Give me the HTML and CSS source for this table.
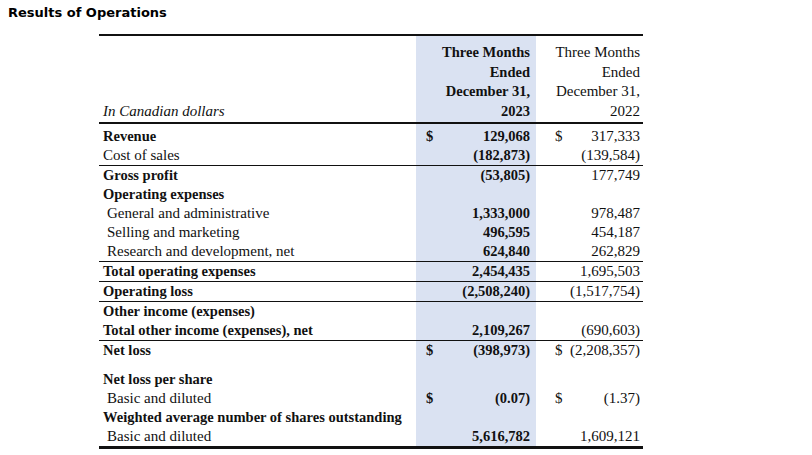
FILE: index.html
```html
<!DOCTYPE html>
<html>
<head>
<meta charset="utf-8">
<link rel="stylesheet" href="styles.css">
</head>
<body>
<h1 class="title">Results of Operations</h1>
<table class="fin">
  <colgroup>
    <col class="c-label"><col class="c-cur1"><col class="c-num1"><col class="c-cur2"><col class="c-num2">
  </colgroup>
  <tr class="head">
    <td class="label"><i>In Canadian dollars</i></td>
    <td class="blue hnum" colspan="2"><b>Three Months<br>Ended<br>December 31,<br>2023</b></td>
    <td class="hnum2" colspan="2">Three Months<br>Ended<br>December 31,<br>2022</td>
  </tr>
  <tr class="first">
    <td class="label b">Revenue</td><td class="blue cur b">$</td><td class="blue num b">129,068</td><td class="cur2">$</td><td class="num2">317,333</td>
  </tr>
  <tr class="line">
    <td class="label">Cost of sales</td><td class="blue cur"></td><td class="blue num b">(182,873)</td><td class="cur2"></td><td class="num2">(139,584)</td>
  </tr>
  <tr>
    <td class="label b">Gross profit</td><td class="blue cur"></td><td class="blue num b">(53,805)</td><td class="cur2"></td><td class="num2">177,749</td>
  </tr>
  <tr>
    <td class="label b">Operating expenses</td><td class="blue cur"></td><td class="blue num"></td><td class="cur2"></td><td class="num2"></td>
  </tr>
  <tr>
    <td class="label ind">General and administrative</td><td class="blue cur"></td><td class="blue num b">1,333,000</td><td class="cur2"></td><td class="num2">978,487</td>
  </tr>
  <tr>
    <td class="label ind">Selling and marketing</td><td class="blue cur"></td><td class="blue num b">496,595</td><td class="cur2"></td><td class="num2">454,187</td>
  </tr>
  <tr class="line">
    <td class="label ind">Research and development, net</td><td class="blue cur"></td><td class="blue num b">624,840</td><td class="cur2"></td><td class="num2">262,829</td>
  </tr>
  <tr class="line">
    <td class="label b">Total operating expenses</td><td class="blue cur"></td><td class="blue num b">2,454,435</td><td class="cur2"></td><td class="num2">1,695,503</td>
  </tr>
  <tr class="line">
    <td class="label b">Operating loss</td><td class="blue cur"></td><td class="blue num b">(2,508,240)</td><td class="cur2"></td><td class="num2">(1,517,754)</td>
  </tr>
  <tr>
    <td class="label b">Other income (expenses)</td><td class="blue cur"></td><td class="blue num"></td><td class="cur2"></td><td class="num2"></td>
  </tr>
  <tr class="line">
    <td class="label b">Total other income (expenses), net</td><td class="blue cur"></td><td class="blue num b">2,109,267</td><td class="cur2"></td><td class="num2">(690,603)</td>
  </tr>
  <tr>
    <td class="label b">Net loss</td><td class="blue cur b">$</td><td class="blue num b">(398,973)</td><td class="cur2">$</td><td class="num2">(2,208,357)</td>
  </tr>
  <tr class="gap">
    <td class="label"></td><td class="blue cur"></td><td class="blue num"></td><td class="cur2"></td><td class="num2"></td>
  </tr>
  <tr>
    <td class="label b">Net loss per share</td><td class="blue cur"></td><td class="blue num"></td><td class="cur2"></td><td class="num2"></td>
  </tr>
  <tr>
    <td class="label ind">Basic and diluted</td><td class="blue cur b">$</td><td class="blue num b">(0.07)</td><td class="cur2">$</td><td class="num2">(1.37)</td>
  </tr>
  <tr>
    <td class="label b">Weighted average number of shares outstanding</td><td class="blue cur"></td><td class="blue num"></td><td class="cur2"></td><td class="num2"></td>
  </tr>
  <tr class="last">
    <td class="label ind">Basic and diluted</td><td class="blue cur"></td><td class="blue num b">5,616,782</td><td class="cur2"></td><td class="num2">1,609,121</td>
  </tr>
</table>
</body>
</html>
```
FILE: styles.css
```css
html, body {
  margin: 0;
  padding: 0;
  background: #fff;
}
body {
  padding: 5px 8px 0 8px;
}
.title {
  margin: 0;
  font-family: "DejaVu Sans", Verdana, sans-serif;
  font-size: 13px;
  font-weight: bold;
  color: #000;
  line-height: 16px;
}
.fin {
  margin: 13px 0 0 91px;
  border-collapse: collapse;
  table-layout: fixed;
  width: 544px;
  font-family: "Liberation Serif", "Times New Roman", serif;
  font-size: 15px;
  color: #111;
  border-top: 2px solid #111;
  border-bottom: 3px solid #111;
}
.c-label { width: 317px; }
.c-cur1 { width: 30px; }
.c-num1 { width: 90px; }
.c-cur2 { width: 30px; }
.c-num2 { width: 77px; }
.fin td {
  padding: 0;
  line-height: 19px;
  white-space: nowrap;
  vertical-align: middle;
}
.blue { background: #dae2f2; }
.b { font-weight: bold; font-size: 14.5px; }
.label { padding-left: 4px !important; }
.label.ind { padding-left: 8px !important; }
.cur { padding-left: 10px !important; }
.num { text-align: right; padding-right: 6px !important; }
.cur2 { padding-left: 19px !important; }
.num2 { text-align: right; padding-right: 3px !important; }
.head td {
  vertical-align: bottom;
  border-bottom: 2px solid #111;
  padding-top: 7px;
  padding-bottom: 1px;
  line-height: 19.5px;
}
.head b { font-size: 14.5px; }
.hnum { text-align: right; padding-right: 6px !important; }
.hnum2 { text-align: right; padding-right: 3px !important; }
.first td { padding-top: 3px; }
.line td { border-bottom: 1px solid #111; }
.gap td { line-height: 10px; height: 10px; }
```
